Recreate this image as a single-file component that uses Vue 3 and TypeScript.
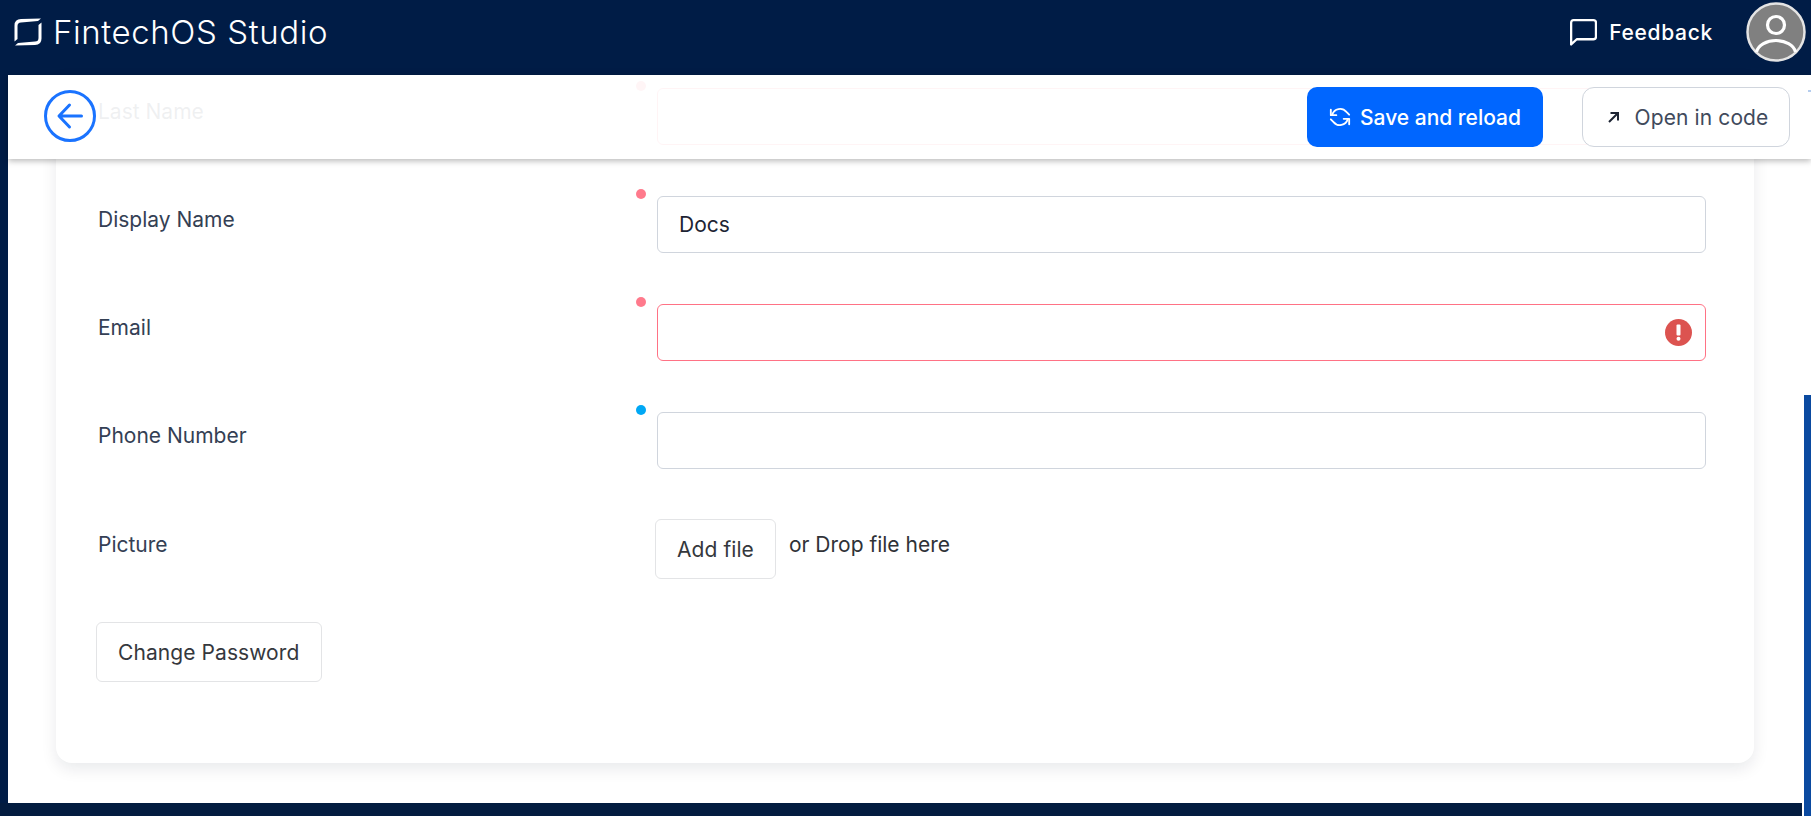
<script setup lang="ts">
interface Field {
  label: string
  value: string
  marker: 'required' | 'optional'
  error?: boolean
}

const fields: Field[] = [
  { label: 'Last Name', value: '', marker: 'required', error: true },
  { label: 'Display Name', value: 'Docs', marker: 'required' },
  { label: 'Email', value: '', marker: 'required', error: true },
  { label: 'Phone Number', value: '', marker: 'optional' },
]
</script>

<template>
  <div class="page">
    <header class="topbar">
      <div class="brand">
        <svg class="logo" viewBox="0 0 28 28" fill="#fff">
          <path d="M0.500 23.500L3.500 21V8Q3.500 4.500 7 4.500L24 3L27 0.500L7 1Q0.500 1 0.500 7.500Z" />
          <path d="M27.500 4.500L24.500 7V20Q24.500 23.500 21 23.500L4 25L1 27.500L21 27Q27.500 27 27.500 20.500Z" />
        </svg>
        <span class="brand-name">FintechOS Studio</span>
      </div>
      <div class="feedback">
        <svg class="feedback-icon" viewBox="0 0 26 26" fill="none" stroke="#fff" stroke-width="2.200" stroke-linejoin="round">
          <path d="M1.100 24.500V3.500Q1.100 1.100 3.500 1.100H22.500Q25 1.100 25 3.500V17Q25 19.500 22.500 19.500H6.500Z" />
        </svg>
        <span>Feedback</span>
      </div>
      <svg class="avatar" viewBox="0 0 60 60">
        <circle cx="30" cy="30" r="28.500" fill="#808080" stroke="#e4e4e4" stroke-width="2.500" />
        <circle cx="30" cy="23" r="8.500" fill="none" stroke="#fff" stroke-width="3.200" />
        <path d="M10.500 50C12 43 21 38.500 30 38.500S48 43 49.500 50" fill="none" stroke="#fff" stroke-width="3.200" />
      </svg>
    </header>

    <main class="workspace">
      <div class="toolbar">
        <svg class="back" viewBox="0 0 52 52" fill="none" stroke="#1a73ff">
          <circle cx="26" cy="26" r="24.500" stroke-width="3" />
          <path d="M37.500 26H16M25.500 15L15 26L25.500 37" stroke-width="3" stroke-linecap="round" stroke-linejoin="round" />
        </svg>
        <button class="btn-primary" type="button">
          <svg viewBox="0 0 24 24" fill="none" stroke="#fff" stroke-width="2" stroke-linecap="round" stroke-linejoin="round">
            <path d="M2 4v6h6M22 20v-6h-6" />
            <path d="M3.500 9.500A9 9 0 0 1 19 6.500l3 3M20.500 14.500A9 9 0 0 1 5 17.500l-3-3" />
          </svg>
          Save and reload
        </button>
        <button class="btn-outline" type="button">
          <svg viewBox="0 0 12 12" fill="none" stroke="#1d2433" stroke-width="2">
            <path d="M1 11L10 2M2.500 2H10V9.500" />
          </svg>
          Open in code
        </button>
      </div>
      <span class="edge-mark"></span>

      <section class="card">
        <div v-for="field in fields" :key="field.label" class="row">
          <label class="label">{{ field.label }}</label>
          <div class="control">
            <span class="dot" :class="field.marker"></span>
            <div class="input" :class="{ invalid: field.error }">
              <span>{{ field.value }}</span>
              <svg v-if="field.error" class="error-icon" viewBox="0 0 27 27">
                <circle cx="13.500" cy="13.500" r="13.500" fill="#dc5350" />
                <rect x="11.500" y="5.500" width="4" height="11" rx="1" fill="#fff" />
                <circle cx="13.500" cy="19.800" r="2" fill="#fff" />
              </svg>
            </div>
          </div>
        </div>

        <div class="row picture-row">
          <label class="label">Picture</label>
          <div class="upload">
            <button class="btn-plain" type="button">Add file</button>
            <span class="drop">or Drop file here</span>
          </div>
        </div>

        <button class="btn-plain password" type="button">Change Password</button>
      </section>

      <div class="footer-bar"></div>
      <div class="side-strip"></div>
    </main>
  </div>
</template>

<style scoped>
.page {
  display: flex;
  flex-direction: column;
  height: 816px;
  overflow: hidden;
  background: #001c46;
  font-family: Inter, "Liberation Sans", sans-serif;
}

.topbar {
  box-sizing: border-box;
  display: flex;
  align-items: center;
  flex: 0 0 75px;
  padding: 0 5px 11px 14px;
  color: #fff;
}

.brand {
  display: flex;
  align-items: center;
  gap: 11px;
  margin-right: auto;
}

.logo {
  width: 28px;
  height: 28px;
}

.brand-name {
  font-size: 33px;
  font-weight: 300;
  letter-spacing: 0.6px;
  line-height: 40px;
}

.feedback {
  display: flex;
  align-items: center;
  gap: 12px;
  font-size: 21px;
  font-weight: 500;
  letter-spacing: 0.7px;
  margin-right: 33px;
}

.feedback-icon {
  width: 27px;
  height: 27px;
}

.avatar {
  width: 60px;
  height: 60px;
}

.workspace {
  position: relative;
  flex: 1;
  display: flex;
  flex-direction: column;
  margin-left: 8px;
  background: #fff;
  min-height: 0;
}

.toolbar {
  position: absolute;
  top: 0;
  left: 0;
  right: 0;
  z-index: 2;
  display: flex;
  align-items: center;
  box-sizing: border-box;
  height: 84px;
  padding: 0 21px 0 36px;
  background: rgba(255, 255, 255, 0.92);
  box-shadow: 0 2px 6px rgba(0, 0, 0, 0.28);
}

.back {
  width: 52px;
  height: 52px;
  margin-right: auto;
  margin-top: -2px;
}

.btn-primary,
.btn-outline {
  display: flex;
  align-items: center;
  justify-content: center;
  box-sizing: border-box;
  height: 60px;
  font-family: inherit;
  font-size: 21px;
  cursor: pointer;
}

.btn-primary {
  width: 236px;
  gap: 9px;
  border: 0;
  border-radius: 10px;
  background: #0066ff;
  color: #fff;
  font-weight: 500;
}

.btn-primary svg {
  width: 22px;
  height: 22px;
}

.btn-outline {
  width: 208px;
  gap: 15px;
  margin-left: 39px;
  padding: 0 0 0 4px;
  border: 1px solid #d0d5dd;
  border-radius: 12px;
  background: #fff;
  color: #414a5c;
  letter-spacing: 0.1px;
}

.btn-outline svg {
  width: 12px;
  height: 12px;
}

.edge-mark {
  position: absolute;
  z-index: 3;
  top: 15px;
  right: 0;
  width: 3px;
  height: 2px;
  background: #b5cdee;
}

.card {
  box-sizing: border-box;
  flex: 0 0 688px;
  margin: 0 57px 0 48px;
  padding: 13px 48px 0 42px;
  background: #fff;
  border-radius: 0 0 16px 16px;
  box-shadow: 0 6px 16px rgba(16, 24, 40, 0.09);
}

.row {
  display: flex;
  align-items: flex-start;
  margin-bottom: 51px;
}

.label {
  flex: 0 0 559px;
  padding-top: 9px;
  color: #344054;
  font-size: 21px;
  line-height: 30px;
}

.control {
  position: relative;
  flex: 1;
}

.dot {
  position: absolute;
  top: -7px;
  left: -21px;
  width: 10px;
  height: 10px;
  border-radius: 50%;
}

.dot.required {
  background: #ff7a8c;
}

.dot.optional {
  background: #00a8f5;
}

.input {
  display: flex;
  align-items: center;
  justify-content: space-between;
  box-sizing: border-box;
  height: 57px;
  padding: 0 13px 0 21px;
  border: 1px solid #d0d5dd;
  border-radius: 6px;
  color: #1d2433;
  font-size: 21px;
}

.input.invalid {
  border-color: #ff7285;
}

.error-icon {
  width: 27px;
  height: 27px;
}

.picture-row {
  margin-bottom: 43px;
}

.picture-row .label {
  padding-top: 10px;
}

.upload {
  display: flex;
  align-items: flex-start;
  gap: 13px;
  margin: -1px 0 0 -2px;
}

.drop {
  padding-top: 11px;
  color: #2f3237;
  font-size: 21px;
  line-height: 30px;
}

.btn-plain {
  box-sizing: border-box;
  height: 60px;
  padding: 0 21px;
  border: 1px solid #e3e4e6;
  border-radius: 6px;
  background: #fff;
  color: #35383d;
  font-family: inherit;
  font-size: 21px;
  letter-spacing: 0.08px;
  cursor: pointer;
}

.password {
  margin-left: -2px;
  padding-right: 22px;
}

.footer-bar {
  flex: 0 0 13px;
  margin: 40px 9px 0 -8px;
  background: #031c40;
}

.side-strip {
  position: absolute;
  top: 320px;
  right: 0;
  bottom: 0;
  width: 7px;
  background: #0b4aa0;
}
</style>
